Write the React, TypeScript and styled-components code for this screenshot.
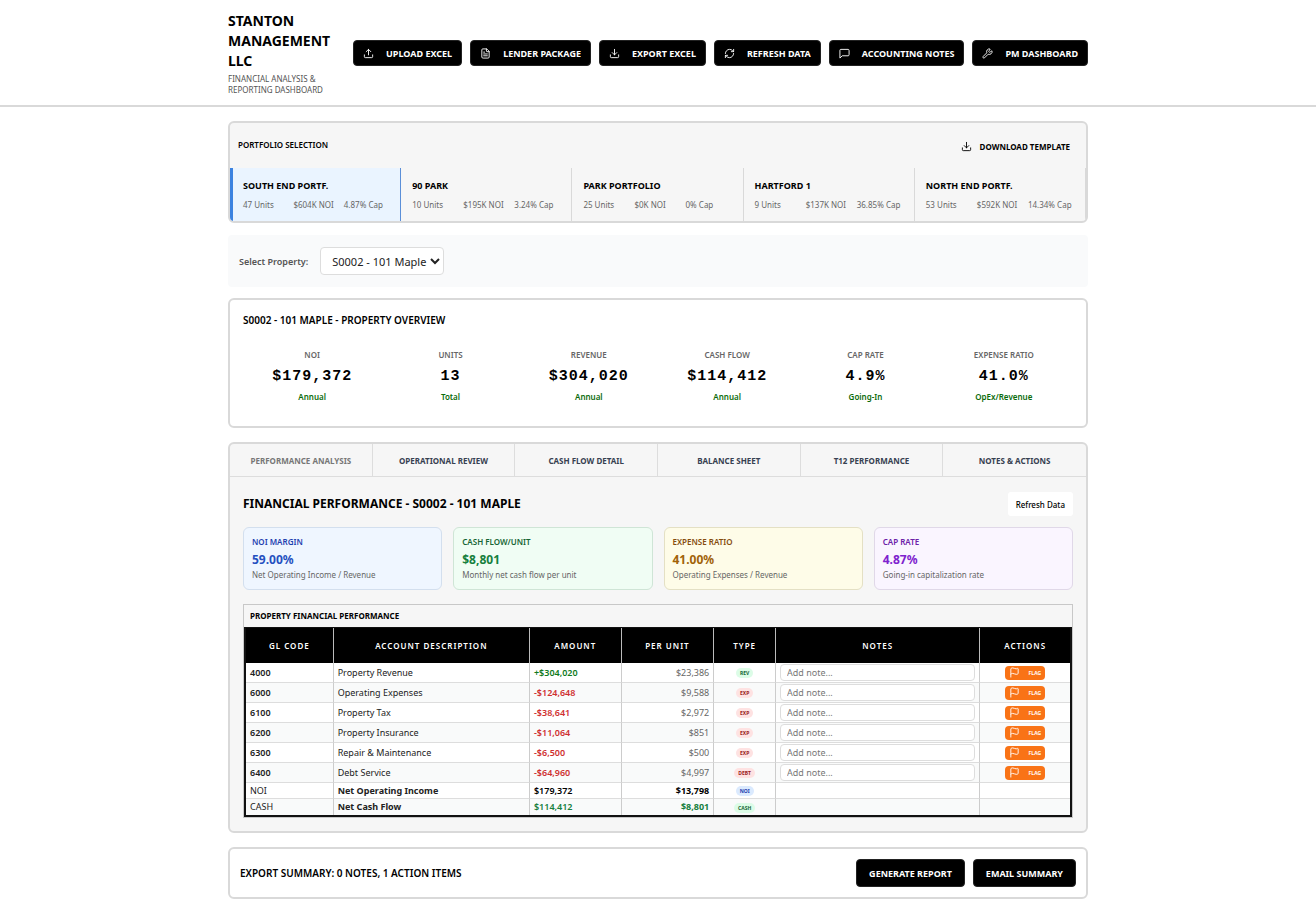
import React from "react";
import styled, { createGlobalStyle } from "styled-components";
import { Upload, FileText, Download, RefreshCw, Wrench, Flag } from "lucide-react";

const GlobalStyle = createGlobalStyle`
  *, *::before, *::after { box-sizing: border-box; }
  body { margin: 0; background: #fff; color: #000; font-family: "Noto Sans", "Segoe UI", sans-serif; font-size: 10px; }
  button, input, select { font-family: inherit; }
  h1, h2, h3, p { margin: 0; }
`;

const Header = styled.header`
  border-bottom: 2px solid #d9d9d9;
  padding: 11px 16px 10px;
`;
const Container = styled.div`
  max-width: 860px;
  margin: 0 auto;
`;
const HeaderRow = styled(Container)`
  display: flex;
  align-items: center;
  justify-content: space-between;
  gap: 16px;
`;
const Title = styled.h1`
  font-size: 14px;
  line-height: 20px;
  font-weight: 700;
`;
const Subtitle = styled.p`
  font-size: 8px;
  line-height: 11px;
  color: #555;
  margin-top: 2px;
`;
const Brand = styled.div`
  flex: 0 1 110px;
`;
const Toolbar = styled.nav`
  display: flex;
  gap: 8px;
`;
const DarkButton = styled.button<{ $large?: boolean }>`
  display: inline-flex;
  align-items: center;
  gap: 12px;
  height: ${(p) => (p.$large ? 28 : 26)}px;
  padding: 0 ${(p) => (p.$large ? 12 : 9)}px;
  border: 1px solid #222;
  border-radius: 4px;
  background: #000;
  color: #fff;
  font-size: 9px;
  font-weight: 700;
  white-space: nowrap;
  cursor: pointer;
`;
const Main = styled.main`
  padding: 14px 16px;
`;
const Stack = styled(Container)`
  display: flex;
  flex-direction: column;
`;
const Panel = styled.section<{ $tint?: boolean }>`
  border: 2px solid #d9d9d9;
  border-radius: 6px;
  background: ${(p) => (p.$tint ? "#f6f6f6" : "#fff")};
  overflow: hidden;
`;
const PortfolioHead = styled.div`
  display: flex;
  align-items: center;
  justify-content: space-between;
  height: 45px;
  padding: 0 16px 2px 8px;
`;
const SmallHeading = styled.h2`
  font-size: 8px;
  line-height: 12px;
  font-weight: 600;
`;
const PlainButton = styled.button`
  display: inline-flex;
  align-items: center;
  gap: 8px;
  padding: 4px 0 0;
  border: 0;
  background: none;
  font-size: 8px;
  font-weight: 700;
  color: #000;
  cursor: pointer;
`;
const PortfolioGrid = styled.div`
  display: grid;
  grid-template-columns: repeat(5, 1fr);
`;
const PortfolioItem = styled.button<{ $active?: boolean }>`
  height: 53px;
  padding: 0 11px 0 ${(p) => (p.$active ? 10 : 11)}px;
  border: 0;
  border-right: 1px solid ${(p) => (p.$active ? "#5b8fd8" : "#d9d9d9")};
  border-left: ${(p) => (p.$active ? "3px solid #3b82e0" : "0")};
  background: ${(p) => (p.$active ? "#eaf4ff" : "transparent")};
  text-align: left;
  color: #000;
  cursor: pointer;
`;
const PortfolioName = styled.div`
  font-size: 9px;
  line-height: 14px;
  font-weight: 700;
`;
const PortfolioStats = styled.div`
  display: grid;
  grid-template-columns: repeat(3, minmax(0, 1fr));
  gap: 5px;
  margin-top: 6px;
  font-size: 8px;
  line-height: 12px;
  color: #666;
  white-space: nowrap;
`;
const SelectBar = styled.div`
  display: flex;
  align-items: center;
  gap: 12px;
  height: 52px;
  margin: 12px 0 11px;
  padding: 0 11px;
  border-radius: 4px;
  background: #f9fafb;
`;
const SelectLabel = styled.label`
  font-size: 9px;
  font-weight: 600;
  color: #555;
`;
const Select = styled.select`
  width: 124px;
  height: 28px;
  padding: 0 0 0 7px;
  border: 1px solid #ddd;
  border-radius: 4px;
  background: #fff;
  color: #222;
  font-size: 11px;
`;
const Overview = styled(Panel)`
  height: 130px;
  padding: 13px;
  margin-bottom: 14px;
`;
const OverviewHeading = styled.h2`
  font-size: 10px;
  line-height: 14px;
  font-weight: 600;
`;
const Metrics = styled.div`
  display: grid;
  grid-template-columns: repeat(6, 1fr);
  margin-top: 22px;
  text-align: center;
`;
const MetricLabel = styled.div`
  font-size: 8px;
  line-height: 12px;
  font-weight: 600;
  color: #666;
`;
const MetricValue = styled.div`
  margin: 6px 0 4px;
  font-family: "Liberation Mono", monospace;
  font-size: 15px;
  line-height: 20px;
  font-weight: 700;
  letter-spacing: 1px;
`;
const MetricNote = styled.div`
  font-size: 8px;
  line-height: 12px;
  font-weight: 600;
  color: #0a6b0a;
`;
const Tabs = styled.div`
  display: grid;
  grid-template-columns: repeat(6, 1fr);
  border-bottom: 1px solid #ddd;
`;
const Tab = styled.button<{ $active?: boolean }>`
  height: 32px;
  border: 0;
  border-right: 1px solid #ddd;
  background: transparent;
  color: ${(p) => (p.$active ? "#777" : "#374151")};
  font-size: 8px;
  font-weight: 700;
  cursor: pointer;
  &:last-child { border-right: 0; }
`;
const TabBody = styled.div`
  padding: 15px 13px 13px;
`;
const BodyHead = styled.div`
  display: flex;
  align-items: center;
  justify-content: space-between;
  margin-bottom: 11px;
`;
const BodyTitle = styled.h2`
  font-size: 12px;
  line-height: 18px;
  font-weight: 700;
`;
const RefreshButton = styled.button`
  height: 24px;
  padding: 0 8px;
  border: 0;
  border-radius: 3px;
  background: #fff;
  color: #000;
  font-size: 8px;
  font-weight: 500;
  cursor: pointer;
`;
const Cards = styled.div`
  display: grid;
  grid-template-columns: repeat(4, 1fr);
  gap: 11px;
  margin-bottom: 14px;
`;
const Card = styled.div<{ $bg: string; $border: string }>`
  height: 63px;
  padding: 8px;
  border: 1px solid ${(p) => p.$border};
  border-radius: 6px;
  background: ${(p) => p.$bg};
`;
const CardLabel = styled.div<{ $color: string }>`
  font-size: 8px;
  line-height: 12px;
  font-weight: 600;
  color: ${(p) => p.$color};
`;
const CardValue = styled.div<{ $color: string }>`
  margin-top: 4px;
  font-size: 12px;
  line-height: 16px;
  font-weight: 700;
  color: ${(p) => p.$color};
`;
const CardNote = styled.div`
  margin-top: 1px;
  font-size: 8px;
  line-height: 12px;
  color: #666;
`;
const TableBox = styled.div`
  border: 1px solid #c8c8c8;
`;
const TableHeading = styled.h3`
  padding: 0 6px;
  font-size: 8px;
  line-height: 22px;
  font-weight: 700;
`;
const Table = styled.table`
  width: 100%;
  table-layout: fixed;
  border-collapse: separate;
  border-spacing: 0;
  border: 2px solid #111;
  border-top-width: 1px;
  background: #fff;
`;
const Th = styled.th`
  height: 35px;
  padding: 0;
  border-right: 1px solid #bbb;
  background: #000;
  color: #fff;
  font-size: 8px;
  font-weight: 600;
  letter-spacing: 1px;
  &:last-child { border-right: 0; }
`;
const Row = styled.tr<{ $short?: boolean }>`
  height: ${(p) => (p.$short ? 16 : 20)}px;
  &:nth-child(even) { background: #f9fafa; }
`;
const Td = styled.td<{ $align?: string; $color?: string; $weight?: number }>`
  padding: 0 4px;
  border-right: 1px solid #ccc;
  border-bottom: 1px solid #ddd;
  text-align: ${(p) => p.$align || "left"};
  color: ${(p) => p.$color || "#222"};
  font-size: 9px;
  line-height: 14px;
  font-weight: ${(p) => p.$weight || 400};
  &:last-child { border-right: 0; }
  tr:last-child > & { border-bottom: 0; }
`;
const Badge = styled.span<{ $bg: string; $color: string }>`
  display: inline-block;
  padding: 0 4px;
  border-radius: 5px;
  background: ${(p) => p.$bg};
  color: ${(p) => p.$color};
  font-size: 5px;
  line-height: 10px;
  font-weight: 700;
  vertical-align: middle;
`;
const NoteInput = styled.input`
  display: block;
  width: 100%;
  height: 17px;
  padding: 0 6px;
  border: 1px solid #ddd;
  border-radius: 4px;
  background: #fff;
  font-size: 9px;
  &::placeholder { color: #777; }
`;
const FlagButton = styled.button`
  display: flex;
  align-items: center;
  justify-content: space-between;
  width: 40px;
  height: 14px;
  margin: 0 auto;
  padding: 0 4px;
  border: 0;
  border-radius: 4px;
  background: #f97316;
  color: #fff;
  font-size: 5px;
  font-weight: 700;
  cursor: pointer;
`;
const Footer = styled(Panel)`
  display: flex;
  align-items: center;
  justify-content: space-between;
  height: 52px;
  margin-top: 14px;
  padding: 0 10px;
`;
const FooterText = styled.p`
  font-size: 10px;
  line-height: 14px;
  font-weight: 600;
`;

const SpeechIcon = ({ size }: { size: number }) => (
  <svg width={size} height={size} viewBox="0 0 24 24" fill="none" stroke="currentColor" strokeWidth="2" strokeLinecap="round" strokeLinejoin="round" aria-hidden="true">
    <path d="M22 15a2 2 0 0 1-2 2H7l-5 5V5a2 2 0 0 1 2-2h16a2 2 0 0 1 2 2z" />
  </svg>
);

const actions = [
  { label: "UPLOAD EXCEL", Icon: Upload },
  { label: "LENDER PACKAGE", Icon: FileText },
  { label: "EXPORT EXCEL", Icon: Download },
  { label: "REFRESH DATA", Icon: RefreshCw },
  { label: "ACCOUNTING NOTES", Icon: SpeechIcon },
  { label: "PM DASHBOARD", Icon: Wrench },
];
const portfolios = [
  ["SOUTH END PORTF.", "47 Units", "$604K NOI", "4.87% Cap"],
  ["90 PARK", "10 Units", "$195K NOI", "3.24% Cap"],
  ["PARK PORTFOLIO", "25 Units", "$0K NOI", "0% Cap"],
  ["HARTFORD 1", "9 Units", "$137K NOI", "36.85% Cap"],
  ["NORTH END PORTF.", "53 Units", "$592K NOI", "14.34% Cap"],
];
const metrics = [
  ["NOI", "$179,372", "Annual"],
  ["UNITS", "13", "Total"],
  ["REVENUE", "$304,020", "Annual"],
  ["CASH FLOW", "$114,412", "Annual"],
  ["CAP RATE", "4.9%", "Going-In"],
  ["EXPENSE RATIO", "41.0%", "OpEx/Revenue"],
];
const tabs = ["PERFORMANCE ANALYSIS", "OPERATIONAL REVIEW", "CASH FLOW DETAIL", "BALANCE SHEET", "T12 PERFORMANCE", "NOTES & ACTIONS"];
const cards = [
  { label: "NOI MARGIN", value: "59.00%", note: "Net Operating Income / Revenue", bg: "#eff6ff", border: "#d3dfee", dark: "#1e40af", color: "#2450c0" },
  { label: "CASH FLOW/UNIT", value: "$8,801", note: "Monthly net cash flow per unit", bg: "#f0fdf4", border: "#cfe5d6", dark: "#166534", color: "#15803d" },
  { label: "EXPENSE RATIO", value: "41.00%", note: "Operating Expenses / Revenue", bg: "#fefce8", border: "#e4e0c4", dark: "#854d0e", color: "#a16207" },
  { label: "CAP RATE", value: "4.87%", note: "Going-in capitalization rate", bg: "#faf5ff", border: "#e0d8e8", dark: "#6b21a8", color: "#7e22ce" },
];
const columns: [string, number][] = [
  ["GL CODE", 88], ["ACCOUNT DESCRIPTION", 197], ["AMOUNT", 92], ["PER UNIT", 93], ["TYPE", 62], ["NOTES", 205], ["ACTIONS", 90],
];
const badgeColors: Record<string, [string, string]> = {
  REV: ["#dcfce7", "#166534"],
  EXP: ["#fee2e2", "#991b1b"],
  DEBT: ["#fee2e2", "#991b1b"],
  NOI: ["#dbeafe", "#1e40af"],
  CASH: ["#dcfce7", "#166534"],
};
const green = "#15803d";
const red = "#cf3030";
const rows = [
  { code: "4000", name: "Property Revenue", amount: "+$304,020", unit: "$23,386", type: "REV", color: "#0f7a1c" },
  { code: "6000", name: "Operating Expenses", amount: "-$124,648", unit: "$9,588", type: "EXP", color: red },
  { code: "6100", name: "Property Tax", amount: "-$38,641", unit: "$2,972", type: "EXP", color: red },
  { code: "6200", name: "Property Insurance", amount: "-$11,064", unit: "$851", type: "EXP", color: red },
  { code: "6300", name: "Repair & Maintenance", amount: "-$6,500", unit: "$500", type: "EXP", color: red },
  { code: "6400", name: "Debt Service", amount: "-$64,960", unit: "$4,997", type: "DEBT", color: red },
  { code: "NOI", name: "Net Operating Income", amount: "$179,372", unit: "$13,798", type: "NOI", color: "#000", total: true },
  { code: "CASH", name: "Net Cash Flow", amount: "$114,412", unit: "$8,801", type: "CASH", color: green, total: true },
];

export default function App() {
  return (
    <>
      <GlobalStyle />
      <Header>
        <HeaderRow>
          <Brand>
            <Title>STANTON MANAGEMENT LLC</Title>
            <Subtitle>FINANCIAL ANALYSIS &amp; REPORTING DASHBOARD</Subtitle>
          </Brand>
          <Toolbar>
            {actions.map(({ label, Icon }) => (
              <DarkButton key={label}><Icon size={11} />{label}</DarkButton>
            ))}
          </Toolbar>
        </HeaderRow>
      </Header>
      <Main>
        <Stack>
          <Panel $tint>
            <PortfolioHead>
              <SmallHeading>PORTFOLIO SELECTION</SmallHeading>
              <PlainButton><Download size={11} />DOWNLOAD TEMPLATE</PlainButton>
            </PortfolioHead>
            <PortfolioGrid>
              {portfolios.map(([name, ...stats], i) => (
                <PortfolioItem key={name} $active={i === 0}>
                  <PortfolioName>{name}</PortfolioName>
                  <PortfolioStats>{stats.map((s) => <span key={s}>{s}</span>)}</PortfolioStats>
                </PortfolioItem>
              ))}
            </PortfolioGrid>
          </Panel>
          <SelectBar>
            <SelectLabel htmlFor="property">Select Property:</SelectLabel>
            <Select id="property"><option>S0002 - 101 Maple</option></Select>
          </SelectBar>
          <Overview>
            <OverviewHeading>S0002 - 101 MAPLE - PROPERTY OVERVIEW</OverviewHeading>
            <Metrics>
              {metrics.map(([label, value, note]) => (
                <div key={label}>
                  <MetricLabel>{label}</MetricLabel>
                  <MetricValue>{value}</MetricValue>
                  <MetricNote>{note}</MetricNote>
                </div>
              ))}
            </Metrics>
          </Overview>
          <Panel $tint>
            <Tabs role="tablist">
              {tabs.map((t, i) => <Tab key={t} role="tab" aria-selected={i === 0} $active={i === 0}>{t}</Tab>)}
            </Tabs>
            <TabBody>
              <BodyHead>
                <BodyTitle>FINANCIAL PERFORMANCE - S0002 - 101 MAPLE</BodyTitle>
                <RefreshButton>Refresh Data</RefreshButton>
              </BodyHead>
              <Cards>
                {cards.map((c) => (
                  <Card key={c.label} $bg={c.bg} $border={c.border}>
                    <CardLabel $color={c.dark}>{c.label}</CardLabel>
                    <CardValue $color={c.color}>{c.value}</CardValue>
                    <CardNote>{c.note}</CardNote>
                  </Card>
                ))}
              </Cards>
              <TableBox>
                <TableHeading>PROPERTY FINANCIAL PERFORMANCE</TableHeading>
                <Table>
                  <colgroup>{columns.map(([c, w]) => <col key={c} style={{ width: `${(w / 827) * 100}%` }} />)}</colgroup>
                  <thead><tr>{columns.map(([c]) => <Th key={c} scope="col">{c}</Th>)}</tr></thead>
                  <tbody>
                    {rows.map((r) => (
                      <Row key={r.code} $short={r.total}>
                        <Td $weight={r.total ? 400 : 600}>{r.code}</Td>
                        <Td $weight={r.total ? 700 : 400}>{r.name}</Td>
                        <Td $weight={600} $color={r.color}>{r.amount}</Td>
                        <Td $align="right" $weight={r.total ? 700 : 400} $color={r.total ? r.color : "#666"}>{r.unit}</Td>
                        <Td $align="center"><Badge $bg={badgeColors[r.type][0]} $color={badgeColors[r.type][1]}>{r.type}</Badge></Td>
                        <Td>{!r.total && <NoteInput placeholder="Add note..." aria-label={`Note for ${r.name}`} />}</Td>
                        <Td>{!r.total && <FlagButton><Flag size={11} />FLAG</FlagButton>}</Td>
                      </Row>
                    ))}
                  </tbody>
                </Table>
              </TableBox>
            </TabBody>
          </Panel>
          <Footer>
            <FooterText>EXPORT SUMMARY: 0 NOTES, 1 ACTION ITEMS</FooterText>
            <Toolbar>
              <DarkButton $large>GENERATE REPORT</DarkButton>
              <DarkButton $large>EMAIL SUMMARY</DarkButton>
            </Toolbar>
          </Footer>
        </Stack>
      </Main>
    </>
  );
}
